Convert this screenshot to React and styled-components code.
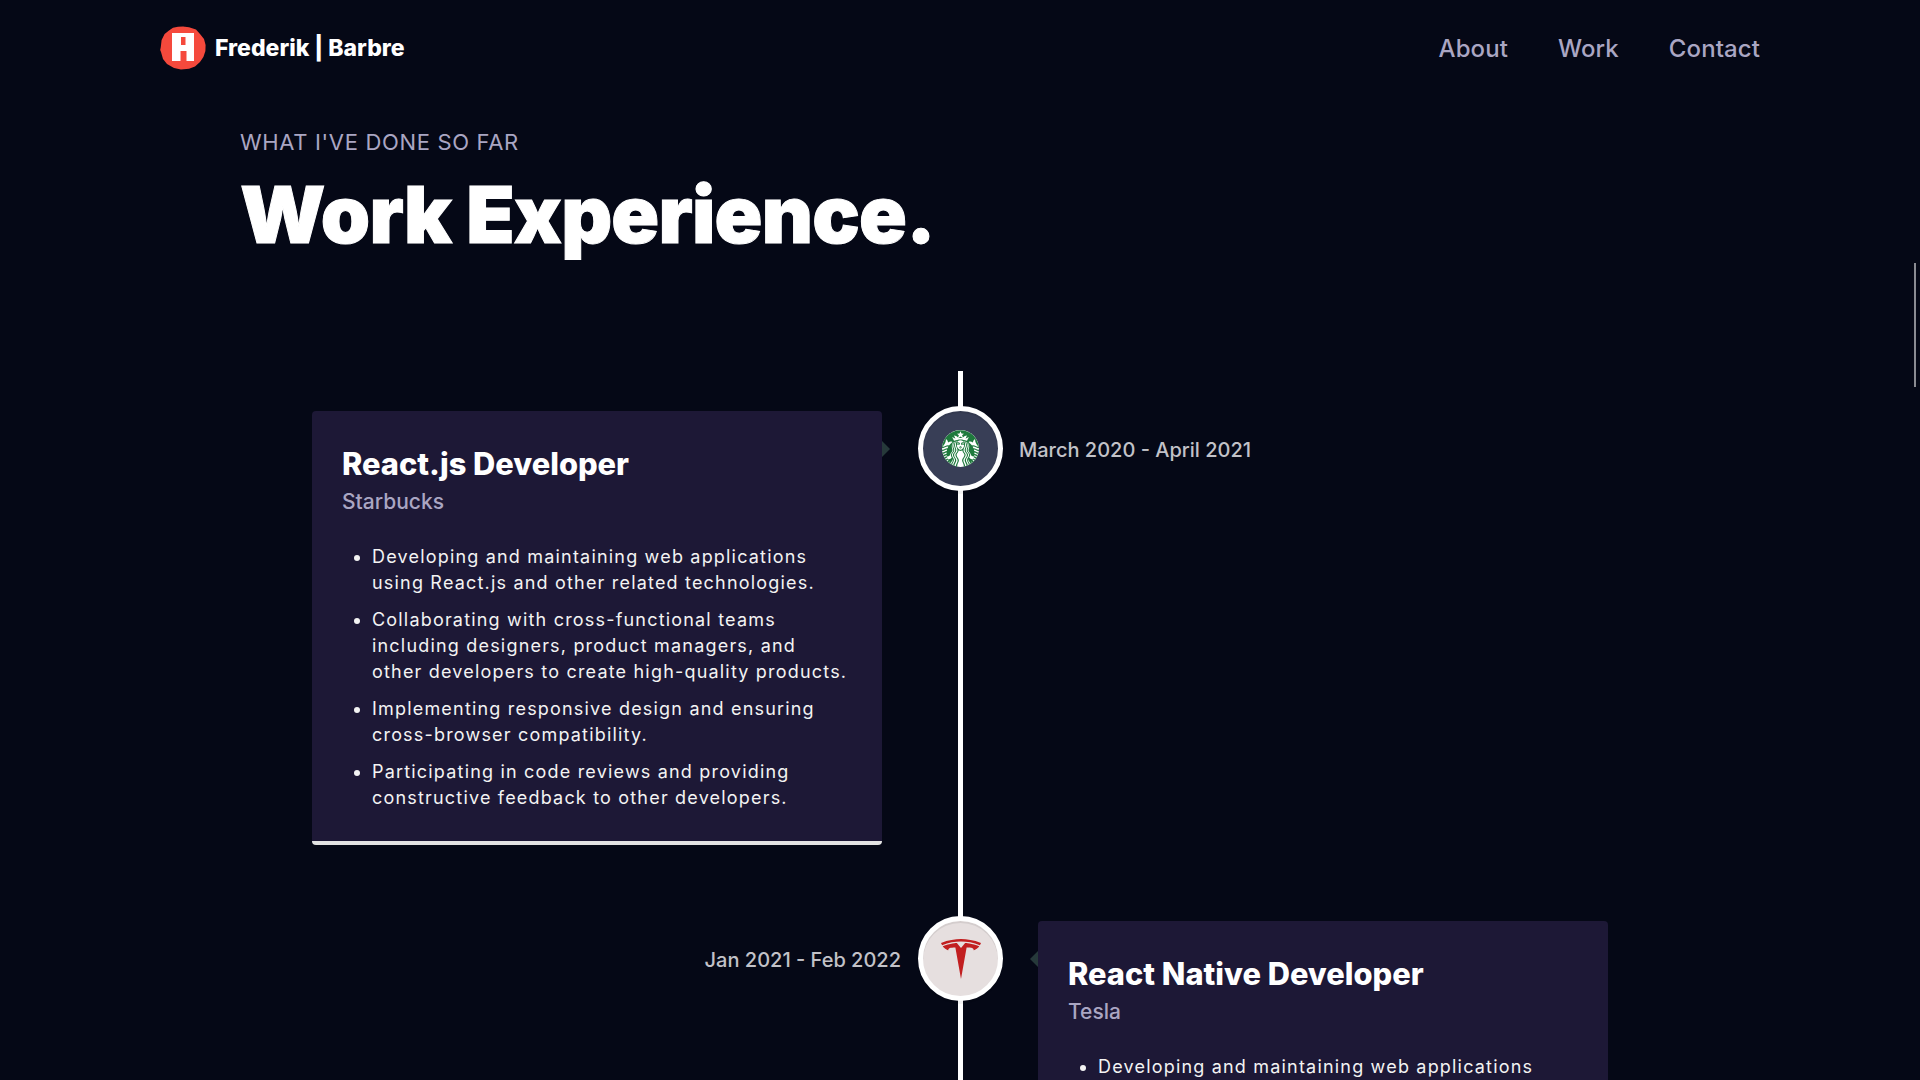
import React from "react";
import styled, { createGlobalStyle } from "styled-components";
import { SiStarbucks, SiTesla } from "react-icons/si";

const Global = createGlobalStyle`
  html, body { margin: 0; height: 100%; background: #050816; overflow: hidden; }
  #root { height: 100vh; overflow: hidden; }
  * { box-sizing: border-box; }
  body { font-family: Inter, "Noto Sans", "Liberation Sans", sans-serif; color: #fff; }
`;

const Page = styled.div`
  width: 1920px;
  height: 1080px;
  overflow: hidden;
  background: #050816;
`;

const Nav = styled.nav`
  height: 96px;
  padding: 0 160px;
  display: flex;
  align-items: center;
  justify-content: space-between;
`;

const Brand = styled.a`
  display: flex;
  align-items: center;
  gap: 9px;
  font-size: 23px;
  font-weight: 800;
  letter-spacing: 0;
  color: #fff;
`;

const NavLinks = styled.ul`
  display: flex;
  gap: 50px;
  list-style: none;
  margin: 0;
  padding: 0;
`;

const NavLink = styled.li`
  font-size: 24px;
  font-weight: 500;
  letter-spacing: 0.004em;
  color: #aaa6c3;
`;

const Section = styled.section`
  padding: 30px 240px 0;
`;

const Eyebrow = styled.p`
  margin: 0;
  font-size: 22px;
  line-height: 32px;
  font-weight: 400;
  letter-spacing: 0.03em;
  color: #aaa6c3;
  text-transform: uppercase;
`;

const Heading = styled.h2`
  margin: 12px 0 0;
  font-size: 79px;
  line-height: 88px;
  font-weight: 900;
  color: #fff;
  letter-spacing: -0.01em;
  -webkit-text-stroke: 1px #fff;
`;

const Timeline = styled.div`
  position: relative;
  margin: 113px -240px 0;
  padding: 40px 312px 0;
  &::before {
    content: "";
    position: absolute;
    top: 0;
    bottom: 0;
    left: 958px;
    width: 5px;
    background: #fff;
  }
`;

const Row = styled.div`
  position: relative;
  display: grid;
  grid-template-columns: 606px 85px 605px;
  height: 510px;
  align-items: start;
`;

const Side = styled.div`
  display: flex;
  justify-content: ${(p) => (p.$right ? "flex-end" : "flex-start")};
`;

const Card = styled.article`
  position: relative;
  width: 570px;
  height: 434px;
  padding: 31px 30px 0;
  background: #1d1836;
  border-bottom: 4px solid #e3e3e3;
  border-radius: 4px;
  &::after {
    content: "";
    position: absolute;
    top: 30px;
    ${(p) => (p.$flip ? "left: -8px;" : "right: -8px;")}
    border-top: 8px solid transparent;
    border-bottom: 8px solid transparent;
    ${(p) =>
      p.$flip
        ? "border-right: 8px solid #26393a;"
        : "border-left: 8px solid #26393a;"}
  }
`;

const Title = styled.h3`
  margin: 0;
  font-size: 30.8px;
  line-height: 44px;
  font-weight: 800;
  color: #fff;
`;

const Company = styled.p`
  margin: 0;
  font-size: 21px;
  line-height: 32px;
  font-weight: 500;
  color: #aaa6c3;
`;

const Bullets = styled.ul`
  margin: 26px 0 0;
  padding: 0 0 0 30px;
`;

const Bullet = styled.li`
  font-size: 18px;
  line-height: 26px;
  letter-spacing: 0.066em;
  color: #f3f3f3;
  margin-bottom: 11px;
  white-space: nowrap;
`;

const Marker = styled.div`
  width: 85px;
  height: 85px;
  margin-top: -5px;
  border-radius: 50%;
  border: 5px solid #fff;
  background: ${(p) => p.$bg};
  color: ${(p) => p.$fg};
  display: flex;
  align-items: center;
  justify-content: center;
  z-index: 1;
  position: relative;
  box-shadow: inset 0 2px 0 rgba(0, 0, 0, 0.08), 0 3px 0 rgba(0, 0, 0, 0.05);
`;

const DateText = styled.div`
  height: 77px;
  display: flex;
  align-items: center;
  font-size: 20px;
  font-weight: 500;
  color: #c2c2c8;
  ${(p) => (p.$end ? "justify-content: flex-end; padding-right: 17px;" : "padding-left: 16px;")}
`;

const StarbucksBadge = styled.span`
  width: 37px;
  height: 37px;
  border-radius: 50%;
  background: #fff;
  display: flex;
  color: #1f7a3d;
`;

const ScrollThumb = styled.div`
  position: fixed;
  top: 263px;
  left: 1914px;
  width: 2px;
  height: 124px;
  background: #8a8b92;
`;

const LogoMark = () => (
  <svg width="46" height="44" viewBox="0 0 46 44" aria-hidden="true">
    <path
      d="M23 0.5 L29 1.2 L36 3.6 L40 8 L44 13 L45.6 19 L45.4 25 L43.4 31 L40 36 L35 40.6 L29 42.8 L21 43.6 L14 42 L7 38 L3 33 L1 26 L0.2 24 L0.8 21 L1.6 14 L4.6 8 L9 4.4 L13 1.8 L18 0.8 Z"
      fill="#f5493c"
    />
    <path
      d="M12 7 H34 V35 H26.5 V25 H20.5 V35 H12 Z M21 11 V19 H25.5 V11 Z"
      fill="#fff"
      fillRule="evenodd"
    />
  </svg>
);

const jobs = [
  {
    title: "React.js Developer",
    company: "Starbucks",
    date: "March 2020 - April 2021",
    points: [
      ["Developing and maintaining web applications", "using React.js and other related technologies."],
      ["Collaborating with cross-functional teams", "including designers, product managers, and", "other developers to create high-quality products."],
      ["Implementing responsive design and ensuring", "cross-browser compatibility."],
      ["Participating in code reviews and providing", "constructive feedback to other developers."],
    ],
  },
  {
    title: "React Native Developer",
    company: "Tesla",
    date: "Jan 2021 - Feb 2022",
    points: [["Developing and maintaining web applications"]],
  },
];

const JobCard = ({ job, flip }) => (
  <Card $flip={flip}>
    <Title>{job.title}</Title>
    <Company>{job.company}</Company>
    <Bullets>
      {job.points.map((lines) => (
        <Bullet key={lines[0]}>
          {lines.map((line, i) => (
            <React.Fragment key={line}>
              {i > 0 && <br />}
              {line}
            </React.Fragment>
          ))}
        </Bullet>
      ))}
    </Bullets>
  </Card>
);

export default function App() {
  return (
    <Page>
      <Global />
      <Nav>
        <Brand>
          <LogoMark />
          Frederik | Barbre
        </Brand>
        <NavLinks>
          <NavLink>About</NavLink>
          <NavLink>Work</NavLink>
          <NavLink>Contact</NavLink>
        </NavLinks>
      </Nav>
      <Section>
        <Eyebrow>What I've done so far</Eyebrow>
        <Heading>Work Experience.</Heading>
        <Timeline>
          <Row>
            <Side>
              <JobCard job={jobs[0]} />
            </Side>
            <Marker $bg="#383e56">
              <StarbucksBadge>
                <SiStarbucks size={37} />
              </StarbucksBadge>
            </Marker>
            <DateText>{jobs[0].date}</DateText>
          </Row>
          <Row>
            <DateText $end>{jobs[1].date}</DateText>
            <Marker $bg="#e6dfdf" $fg="#c21f20">
              <SiTesla size={40} />
            </Marker>
            <Side $right>
              <JobCard job={jobs[1]} flip />
            </Side>
          </Row>
        </Timeline>
      </Section>
      <ScrollThumb />
    </Page>
  );
}
